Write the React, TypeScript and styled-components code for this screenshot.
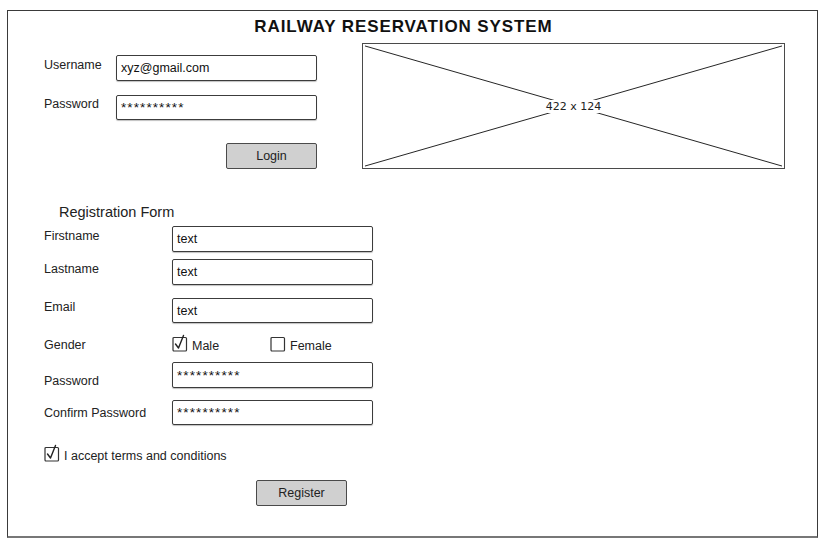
import React from "react";
import styled, { createGlobalStyle } from "styled-components";

const Global = createGlobalStyle`
  html, body { margin: 0; padding: 0; background: #ffffff; }
  body { font-family: "Liberation Sans", Arial, sans-serif; color: #222; }
`;

const Frame = styled.div`
  box-sizing: border-box;
  margin: 10px 0 0 7px;
  width: 811px;
  height: 528px;
  border: 1px solid #3a3a3a;
  border-bottom: 2px solid #777;
  padding: 0 32px 0 36px;
  display: flex;
  flex-direction: column;
`;

const Title = styled.h1`
  margin: 6px 0 0 0;
  padding-right: 22px;
  font-size: 17px;
  line-height: 20px;
  font-weight: 700;
  letter-spacing: 0.9px;
  text-align: center;
  color: #111;
`;

const TopSection = styled.div`
  margin-top: 6px;
  display: flex;
  gap: 45px;
  align-items: flex-start;
`;

const LoginForm = styled.div`
  width: 273px;
  padding-top: 12px;
  display: flex;
  flex-direction: column;
`;

const LoginRow = styled.div<{ $mt?: number }>`
  display: flex;
  align-items: flex-start;
  margin-top: ${(p) => p.$mt ?? 0}px;
`;

const Label = styled.span<{ $w: number; $off?: number }>`
  width: ${(p) => p.$w}px;
  flex: none;
  font-size: 12.5px;
  line-height: 16px;
  padding-top: ${(p) => p.$off ?? 0}px;
  color: #222;
`;

const Input = styled.div<{ $h?: number; $mask?: boolean }>`
  box-sizing: border-box;
  width: 201px;
  height: ${(p) => p.$h ?? 26}px;
  border: 1.5px solid #3c3c3c;
  border-radius: 2px;
  box-shadow: 0 1px 1px rgba(0, 0, 0, 0.25);
  padding: 0 4px;
  display: flex;
  align-items: center;
  font-size: ${(p) => (p.$mask ? "13.5px" : "12.5px")};
  letter-spacing: ${(p) => (p.$mask ? "1.1px" : "0")};
  color: #111;
  background: #fff;
`;

const Button = styled.div<{ $mt: number; $ml?: number; $alignEnd?: boolean }>`
  box-sizing: border-box;
  width: 91px;
  height: 26px;
  margin-top: ${(p) => p.$mt}px;
  margin-left: ${(p) => p.$ml ?? 0}px;
  align-self: ${(p) => (p.$alignEnd ? "flex-end" : "flex-start")};
  background: #d0d0d0;
  border: 1px solid #4a4a4a;
  border-radius: 2px;
  display: flex;
  align-items: center;
  justify-content: center;
  font-size: 12.5px;
  color: #222;
`;

const ImageBox = styled.div`
  position: relative;
  box-sizing: border-box;
  width: 423px;
  height: 126px;
  border: 1.5px solid #4a4a4a;
  display: flex;
  align-items: center;
  justify-content: center;
`;

const ImageLines = styled.svg`
  position: absolute;
  inset: 0;
  width: 100%;
  height: 100%;
`;

const ImageLabel = styled.span`
  position: relative;
  background: #fff;
  padding: 0 1px;
  font-family: "DejaVu Sans", Verdana, sans-serif;
  font-size: 11px;
  line-height: 13px;
  color: #222;
`;

const RegHeading = styled.h2`
  margin: 34px 0 0 15px;
  font-size: 14.5px;
  line-height: 18px;
  font-weight: 400;
  color: #222;
`;

const RegRow = styled.div<{ $mt: number; $h: number }>`
  display: flex;
  align-items: flex-start;
  height: ${(p) => p.$h}px;
  margin-top: ${(p) => p.$mt}px;
`;

const Options = styled.div`
  display: flex;
  align-items: flex-start;
`;

const Option = styled.div<{ $w?: number }>`
  display: flex;
  align-items: flex-start;
  gap: 4px;
  width: ${(p) => (p.$w ? `${p.$w}px` : "auto")};
  font-size: 12.5px;
  line-height: 15px;
  color: #222;
`;

const OptionText = styled.span`
  padding-top: 2px;
`;

const CheckSvg = styled.svg`
  width: 16px;
  height: 17px;
  margin-top: -2px;
  flex: none;
  overflow: visible;
`;

const Check = ({ checked }: { checked?: boolean }) => (
  <CheckSvg viewBox="0 0 16 17">
    <rect x="1" y="2.5" width="13.5" height="13.5" rx="1" fill="#fff" stroke="#333" strokeWidth="1.2" />
    {checked && (
      <path d="M3.5 9 L6.5 13 L11.5 0.5" fill="none" stroke="#222" strokeWidth="1.4" strokeLinecap="round" strokeLinejoin="round" />
    )}
  </CheckSvg>
);

export default function App() {
  return (
    <>
      <Global />
      <Frame>
        <Title>RAILWAY RESERVATION SYSTEM</Title>
        <TopSection>
          <LoginForm>
            <LoginRow>
              <Label $w={72} $off={2}>Username</Label>
              <Input>xyz@gmail.com</Input>
            </LoginRow>
            <LoginRow $mt={14}>
              <Label $w={72} $off={1}>Password</Label>
              <Input $h={25} $mask>**********</Input>
            </LoginRow>
            <Button $mt={23} $alignEnd>Login</Button>
          </LoginForm>
          <ImageBox>
            <ImageLines viewBox="0 0 423 126" preserveAspectRatio="none">
              <line x1="2" y1="2" x2="421" y2="124" stroke="#222" strokeWidth="1" />
              <line x1="421" y1="2" x2="2" y2="124" stroke="#222" strokeWidth="1" />
            </ImageLines>
            <ImageLabel>422 x 124</ImageLabel>
          </ImageBox>
        </TopSection>

        <RegHeading>Registration Form</RegHeading>
        <RegRow $mt={5} $h={26}>
          <Label $w={128} $off={2}>Firstname</Label>
          <Input>text</Input>
        </RegRow>
        <RegRow $mt={7} $h={26}>
          <Label $w={128} $off={2}>Lastname</Label>
          <Input>text</Input>
        </RegRow>
        <RegRow $mt={13} $h={25}>
          <Label $w={128} $off={1}>Email</Label>
          <Input $h={25}>text</Input>
        </RegRow>
        <RegRow $mt={14} $h={15}>
          <Label $w={128} $off={0}>Gender</Label>
          <Options>
            <Option $w={98}><Check checked /><OptionText>Male</OptionText></Option>
            <Option><Check /><OptionText>Female</OptionText></Option>
          </Options>
        </RegRow>
        <RegRow $mt={10} $h={26}>
          <Label $w={128} $off={11}>Password</Label>
          <Input $mask>**********</Input>
        </RegRow>
        <RegRow $mt={12} $h={25}>
          <Label $w={128} $off={5}>Confirm Password</Label>
          <Input $h={25} $mask>**********</Input>
        </RegRow>
        <RegRow $mt={22} $h={15}>
          <Option><Check checked /><OptionText>I accept terms and conditions</OptionText></Option>
        </RegRow>
        <Button $mt={18} $ml={212}>Register</Button>
      </Frame>
    </>
  );
}
